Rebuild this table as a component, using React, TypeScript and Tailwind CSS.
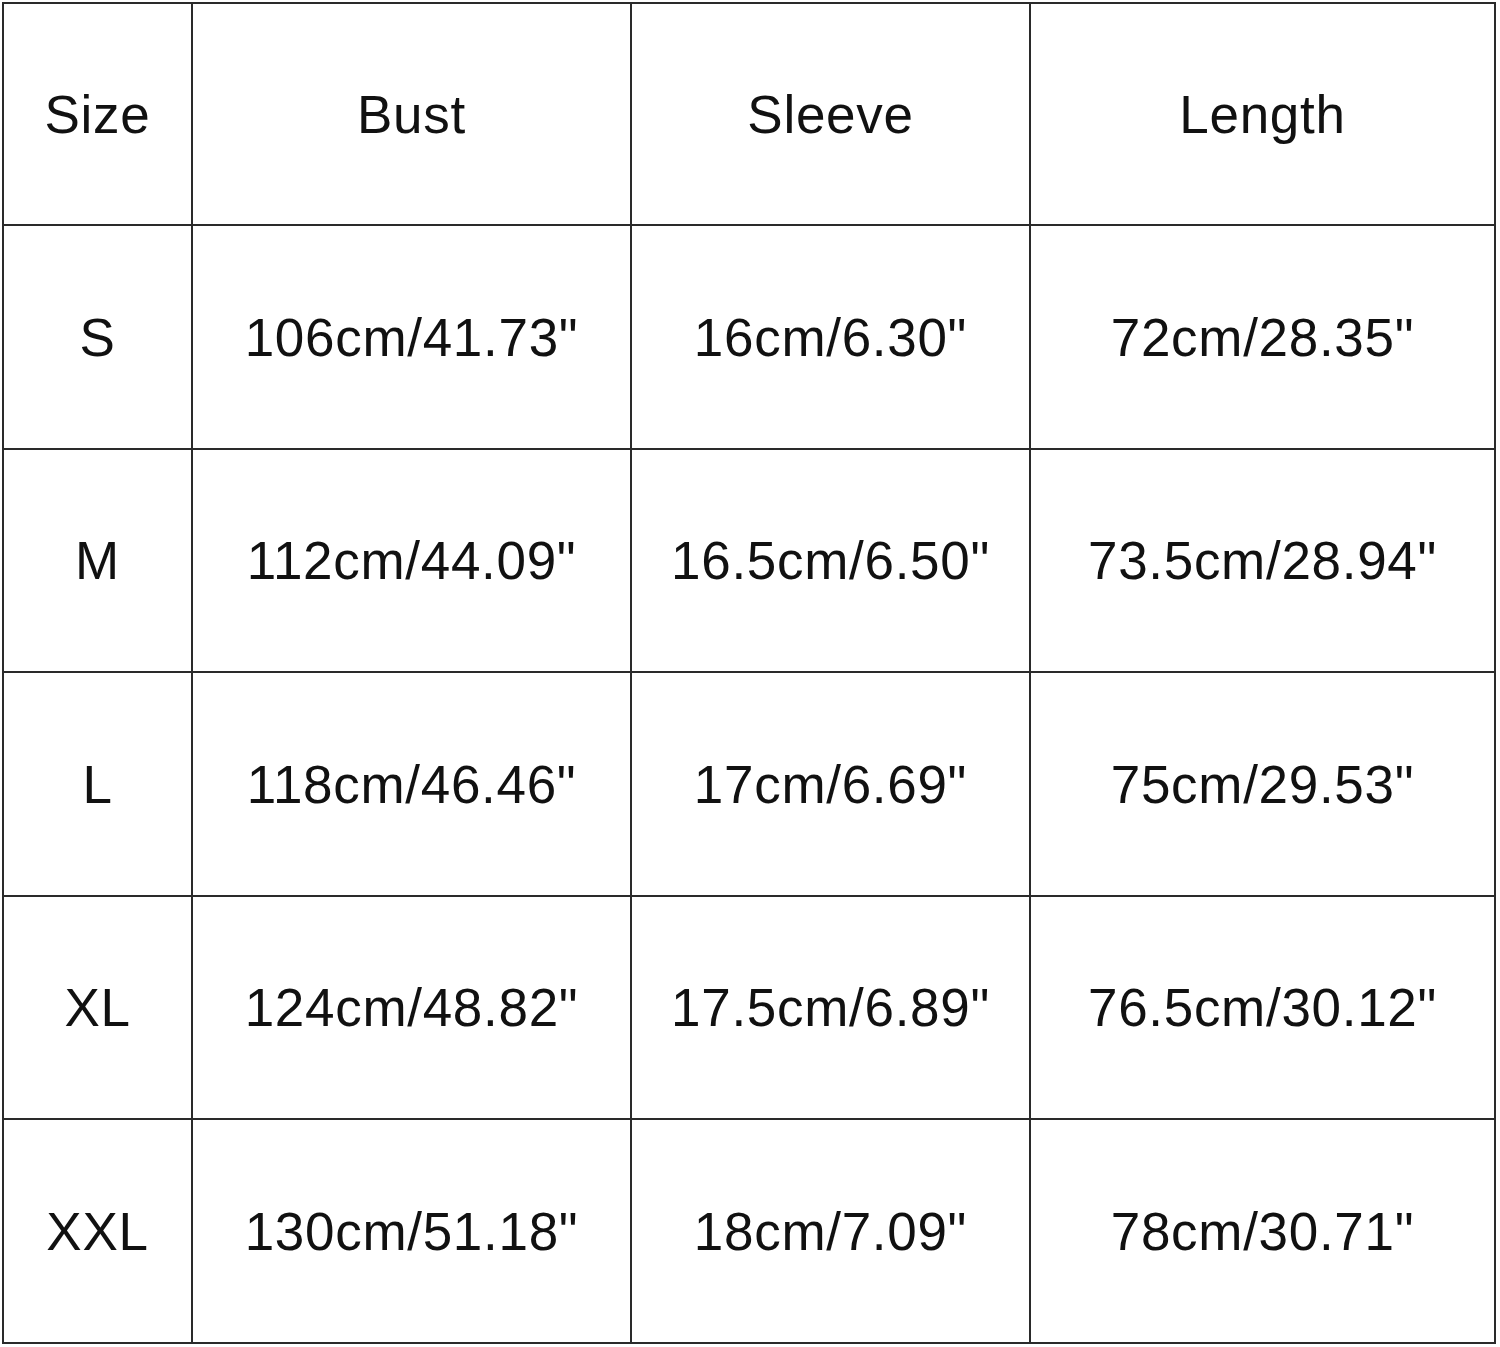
const rows: string[][] = [
  ["Size", "Bust", "Sleeve", "Length"],
  ["S", "106cm/41.73\"", "16cm/6.30\"", "72cm/28.35\""],
  ["M", "112cm/44.09\"", "16.5cm/6.50\"", "73.5cm/28.94\""],
  ["L", "118cm/46.46\"", "17cm/6.69\"", "75cm/29.53\""],
  ["XL", "124cm/48.82\"", "17.5cm/6.89\"", "76.5cm/30.12\""],
  ["XXL", "130cm/51.18\"", "18cm/7.09\"", "78cm/30.71\""],
];

export default function App() {
  return (
    <div className="min-h-[1347px] w-[1500px] bg-white pl-[2px] pt-[2px]">
      <div
        className="grid w-[1494px] grid-cols-[189px_439px_399px_465px] grid-rows-[222px_224px_223px_224px_223px_224px] border-l-2 border-t-2 border-[#2a2a2a]"
        style={{ fontFamily: '"Liberation Sans", Arial, sans-serif' }}
      >
        {rows.flatMap((row, r) =>
          row.map((cell, c) => (
            <div
              key={`${r}-${c}`}
              className="flex items-center justify-center border-b-2 border-r-2 border-[#2a2a2a] text-[53px] leading-none tracking-[0.7px] text-[#111]"
            >
              {cell}
            </div>
          ))
        )}
      </div>
    </div>
  );
}
